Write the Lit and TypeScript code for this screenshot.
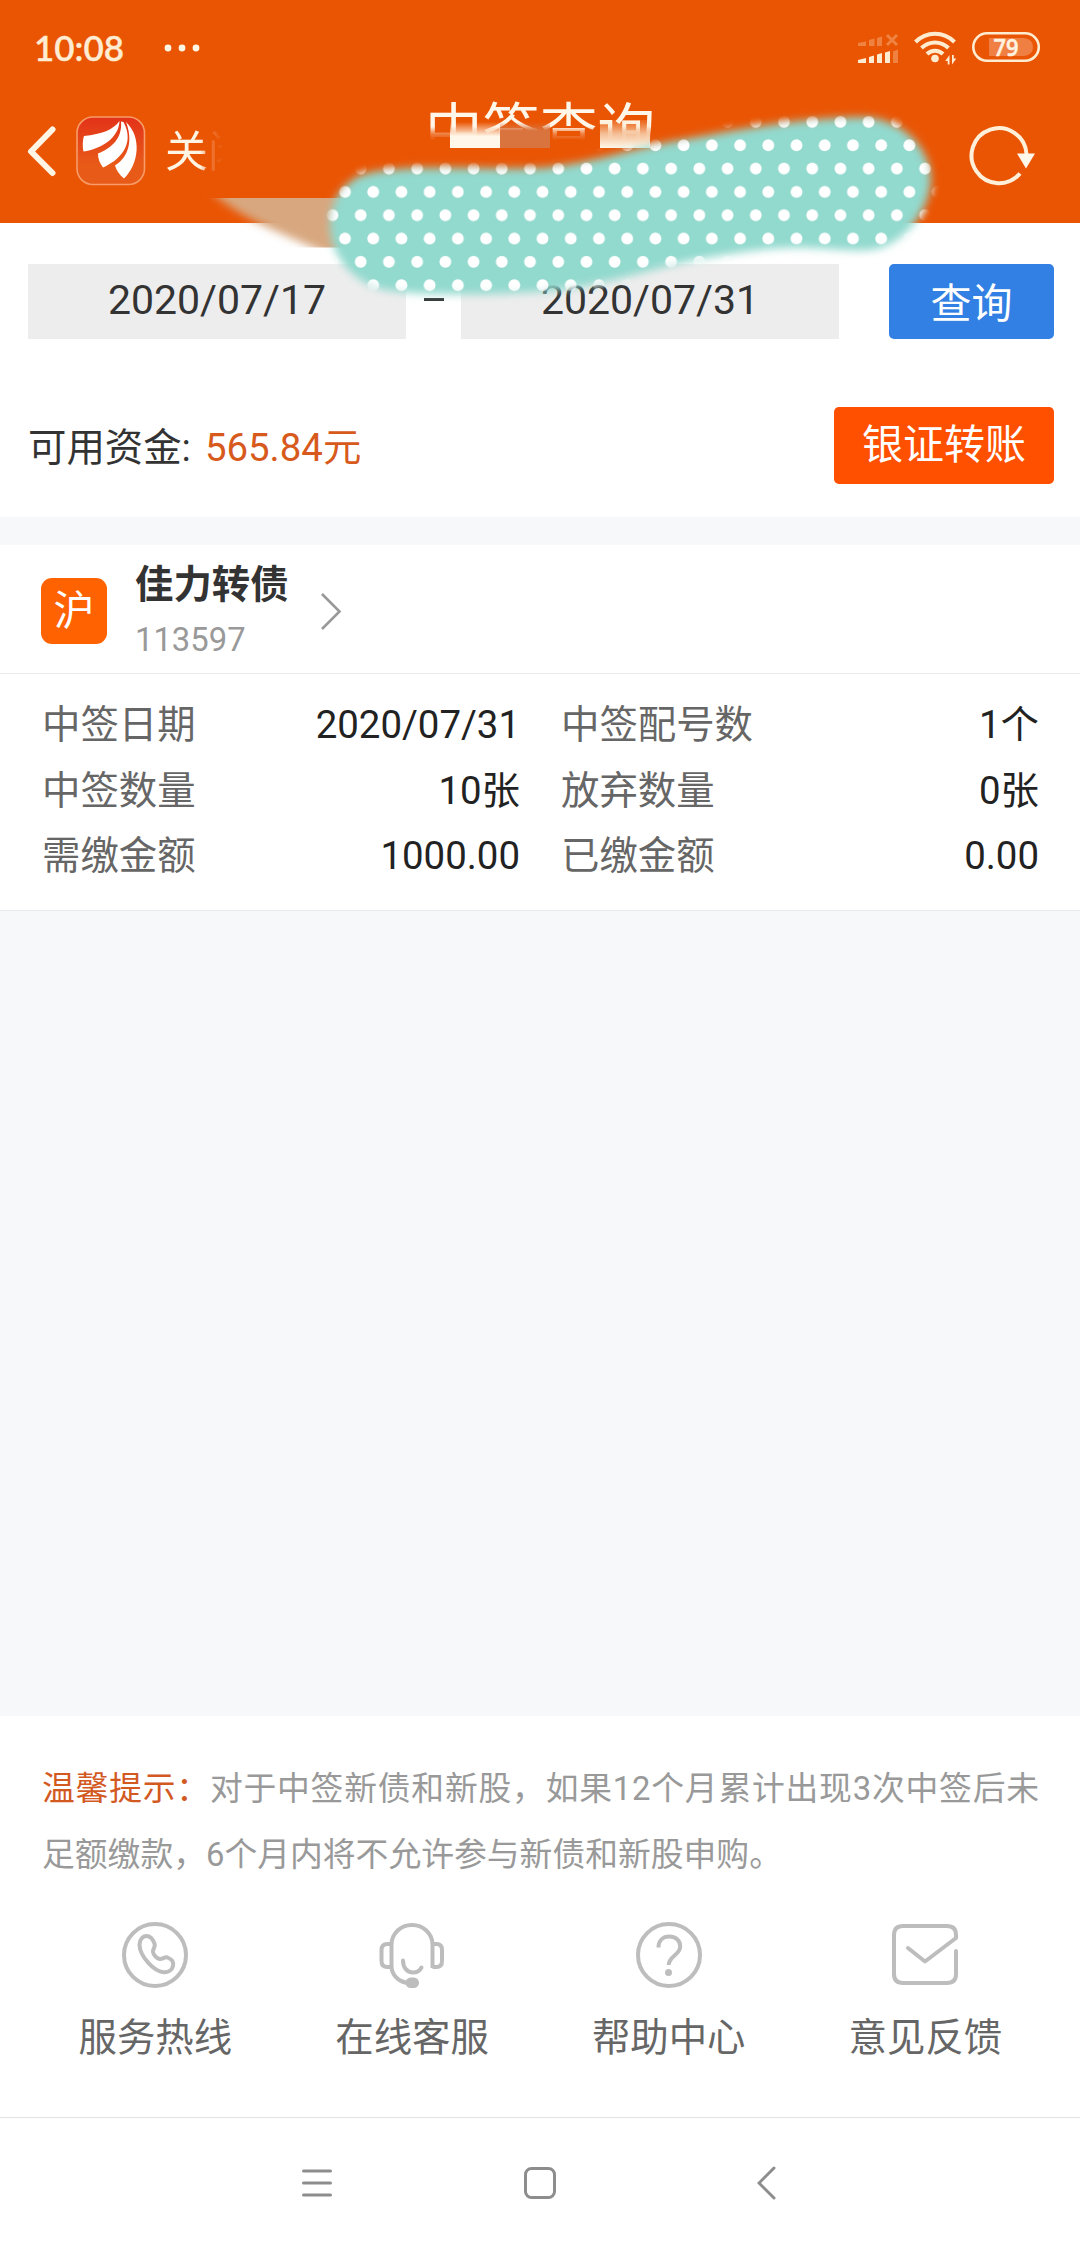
import { LitElement, html, css, svg } from "lit";
import { customElement } from "lit/decorators.js";

interface Cell { label: string; value: string; }

const cells: Cell[] = [
  { label: "中签日期", value: "2020/07/31" },
  { label: "中签配号数", value: "1个" },
  { label: "中签数量", value: "10张" },
  { label: "放弃数量", value: "0张" },
  { label: "需缴金额", value: "1000.00" },
  { label: "已缴金额", value: "0.00" },
];

const services = [
  {
    name: "服务热线",
    icon: svg`<circle cx="34" cy="34" r="31"/>
      <path d="M18.500 24c0-5 3-9 7-9 4.500 0 6.500 3.500 8 7.500 1.500 4-2 5-1.500 8.500.5 3 3.500 6.500 6.500 7 3.500.5 4.500-2.500 8-1.500 4 1.500 6.500 4.500 5.500 8.500-1 4.500-5 6.500-9.500 6.200C33 50.500 19 35.500 18.500 24z"/>`,
  },
  {
    name: "在线客服",
    icon: svg`<path d="M54.500 47V23A20 20 0 0 0 34.500 4h-1A20 20 0 0 0 13.500 23v22c0 9 7 16 17 17"/>
      <path d="M13.500 23h-4q-6 0-6 6v11q0 6 6 6h4M54.500 23h4q5.500 0 5.500 6v11q0 6-5.500 6h-4"/>
      <path d="M25 39.500c0 7 4 12 10 12 4 0 7-2 8.500-5" stroke-linecap="round"/>
      <rect x="27.500" y="56.500" width="13.500" height="10.500" rx="5.200" fill="#bdbdbd" stroke="none"/>`,
  },
  {
    name: "帮助中心",
    icon: svg`<circle cx="34" cy="34" r="31"/>
      <path d="M23.500 26.500c0-7 4.500-11 10.700-11 6.500 0 11 4 11 10 0 8.500-11.500 9.500-11.500 18.500"/>
      <circle cx="33.500" cy="51.500" r="3.500" fill="#bdbdbd" stroke="none"/>`,
  },
  {
    name: "意见反馈",
    icon: svg`<path d="M65 30v23q0 9-9 9H12q-9 0-9-9V14q0-9 9-9h44q9 0 9 9v3L34 40.500 17 27" stroke-linejoin="round" stroke-linecap="round"/>`,
  },
];

const blobPath =
  "M330 228C329 205 341 184 361 175C400 163 470 170 540 168C590 164 620 151 680 140C740 129 800 118 860 117C904 117 931 150 931 180C930 205 914 232 888 245C870 254 850 250 810 248C770 246 720 255 690 261C640 272 600 286 550 291C500 295 420 296 385 290C352 283 331 255 330 228Z";

@customElement("app-root")
export class AppRoot extends LitElement {
  static styles = css`
    :host {
      display: block;
      position: relative;
      width: 1080px;
      height: 2248px;
      overflow: hidden;
      background: #f7f8fa;
      color: #333;
      font-family: Roboto, "Noto Sans CJK SC", sans-serif;
      font-size: 38.400px;
    }
    * { box-sizing: border-box; }
    svg { display: block; flex: none; }
    .page { display: flex; flex-direction: column; height: 2248px; }
    .head { height: 223px; background: #ea5504; color: #fff5e4; flex: none; }
    .status { height: 95px; padding: 0 39px 0 34px; display: flex; align-items: center; }
    .time {
      width: 95px; padding-bottom: 2px; font: 600 35px/36px Lato, sans-serif; color: #ffecd2;
      -webkit-text-stroke: 0.3px #ffecd2;
    }
    .more { margin-left: 34px; }
    .sys { margin-left: auto; }
    .battery { font: 600 23px "Open Sans", sans-serif; }
    .bar { position: relative; display: flex; align-items: center; height: 112px; padding: 0 45px 0 27px; }
    .logo { margin-left: 18px; }
    .close {
      margin-left: 19px; width: 88px; padding-top: 1px; white-space: nowrap; font-size: 43px; line-height: 60px;
      -webkit-mask-image: linear-gradient(90deg, #000 40%, rgba(0,0,0,.2) 53%, transparent 66%);
      mask-image: linear-gradient(90deg, #000 40%, rgba(0,0,0,.2) 53%, transparent 66%);
    }
    .title {
      position: absolute; left: 425px; top: 2px; font-size: 57.500px; line-height: 70px; white-space: nowrap; color: #fff8ea;
      -webkit-mask-image: linear-gradient(#000 42%, rgba(0,0,0,.25) 53%, transparent 62%);
      mask-image: linear-gradient(#000 42%, rgba(0,0,0,.25) 53%, transparent 62%);
    }
    .refresh { margin-left: auto; margin-top: 10px; }
    .query { height: 294px; flex: none; background: #fff; padding: 41px 26px 33px 28px; display: flex; flex-direction: column; }
    .dates { display: flex; height: 75px; }
    .date { width: 378px; background: #ededed; text-align: center; font-size: 41px; line-height: 72px; }
    .dash { width: 55px; display: flex; align-items: center; justify-content: center; padding-bottom: 5px; }
    .dash i { width: 20px; height: 3px; background: #333; }
    .btn { margin-left: auto; color: #fff; font-size: 41px; text-align: center; border-radius: 5px; }
    .search { width: 165px; height: 75px; background: #3280e3; line-height: 81px; }
    .funds { display: flex; margin-top: 68px; height: 77px; line-height: 82px; white-space: pre; }
    .amount { color: #d75a1c; margin-left: 14px; }
    .transfer { width: 220px; height: 77px; background: #ff5000; line-height: 76px; }
    .card { margin-top: 28px; height: 366px; flex: none; background: #fff; border-bottom: 1px solid #e9eaec; }
    .stock { height: 129px; border-bottom: 1px solid #ebebeb; display: flex; align-items: center; padding-left: 41px; }
    .badge { width: 66px; height: 66px; margin-top: 3px; border-radius: 11px; background: #ff6200; color: #fff; font-size: 41px; line-height: 66px; text-align: center; }
    .names { margin-left: 28px; width: 186px; padding-top: 7px; display: flex; flex-direction: column; }
    .name { font-weight: 700; line-height: 54px; }
    .code { font-size: 32.800px; color: #999; line-height: 56px; }
    .grid { display: grid; grid-template-columns: 478px 478px; column-gap: 41px; grid-auto-rows: 65.500px; padding: 18px 0 0 42px; line-height: 65px; }
    .cell { display: flex; justify-content: space-between; }
    .label { color: #666; }
    .value { color: #222; }
    .foot { margin-top: auto; height: 532px; flex: none; background: #fff; display: flex; flex-direction: column; }
    .tip { display: flex; flex-direction: column; padding: 40px 41px 0 42px; height: 205px; font-size: 32.800px; line-height: 66px; color: #999; white-space: nowrap; }
    .full { letter-spacing: 0.780px; }
    .warn { color: #d2591f; }
    .services { display: grid; grid-template-columns: repeat(4, 256.700px); padding-left: 27px; height: 197px; border-bottom: 1px solid #e3e3e3; }
    .service { display: flex; flex-direction: column; align-items: center; color: #666; line-height: 60px; gap: 19px; }
    .nav { flex: 1; display: grid; grid-template-columns: 223px 234px 20px; align-items: center; padding-left: 300px; }
    .nav svg { stroke: #8d8d8d; fill: none; }
    .cover { position: absolute; left: 0; top: 0; pointer-events: none; }
  `;

  render() {
    return html`
      <div class="page">
        <header class="head">
          <div class="status">
            <span class="time">10:08</span>
            <svg class="more" width="40" height="10" fill="#fff5e4">
              <circle cx="5" cy="5" r="3.400"/><circle cx="19" cy="5" r="3.400"/><circle cx="33" cy="5" r="3.400"/>
            </svg>
            <svg class="sys" width="184" height="34" viewBox="858 31 184 34">
              <g fill="#ffebcf">
                <g opacity=".3">
                  <path d="M859 43l8-1.500v4.500h-8zM870 40l5.500-1.500v7.500H870zM878 38l5-1.500v9.500h-5zM894 51.500l5-2v13.500h-5z"/>
                  <path d="M888 35l10 10M898 35l-10 10" stroke="#ffebcf" stroke-width="3"/>
                </g>
                <path d="M859 60l8-2v5h-8zM870 57l5-1.500v7.500h-5zM878 54.500l5-1.500v10h-5zM886 52.500l5-1.500v12h-5z"/>
                <circle cx="936" cy="58.500" r="3.800"/>
                <path d="M950.500 55v9.500h-1.800v-3.500h-2.500zM953 64.500V55h1.800v3.500h2.500z"/>
              </g>
              <g fill="none" stroke="#ffebcf" stroke-width="4">
                <path d="M916.500 42c11-11 28-11 39 0M922.500 48c8-7.500 19-7.500 27 0M928 54c4.500-4.500 11.500-4.500 16 0"/>
                <rect x="974.300" y="33.300" width="65.500" height="27.500" rx="13.700" stroke-width="2.600"/>
              </g>
              <path d="M991 38h34q9 1 9 9t-9 9h-34q-1 0-1-1V39q0-1 1-1z" fill="#fff" opacity=".25"/>
              <text class="battery" x="994.500" y="55.500" textLength="25" lengthAdjust="spacingAndGlyphs" fill="#fff3e0" stroke="#fff3e0" stroke-width=".5">79</text>
            </svg>
          </div>
          <div class="bar">
            <svg width="31" height="52" fill="none" stroke="#fff5e4" stroke-width="6" stroke-linecap="round" stroke-linejoin="round">
              <path d="M25.500 4.500L4 26.500 25.500 48"/>
            </svg>
            <svg class="logo" width="70" height="70">
              <defs><linearGradient id="lg" x2="0" y2="1"><stop stop-color="#e3321a"/><stop offset=".7" stop-color="#e85a18"/><stop offset="1" stop-color="#e85a18"/></linearGradient></defs>
              <rect x="1" y="1" width="67.500" height="67.500" rx="16" fill="url(#lg)" stroke="#f79c68" stroke-width="1.600"/>
              <g fill="#fff">
                <path d="M43.500 5C37 14 26 18 8 20c-1.500 4-1.500 11-.5 15.500C25 33 43 22 43.500 5z"/>
                <path d="M45 5.500C46.500 22 36 32 22 37.500c0 5 1.500 9.500 5 14C42 45 60 29 47.500 6z"/>
                <path d="M50 6C57 24 53 41 39 49.500c1.500 5 4.500 9.500 9 13C63 48 66 21 50 6z"/>
              </g>
            </svg>
            <span class="close">关闭</span>
            <span class="title">中签查询</span>
            <svg class="refresh" width="66" height="62" viewBox="970 125 66 62" fill="none" stroke="#fff0da" stroke-width="4">
              <path d="M1021 173.500A27.500 27.500 0 1 1 1027.500 154"/>
              <path d="M1018 153.500h18l-9 15z" fill="#fff8ea" stroke="none"/>
            </svg>
          </div>
        </header>

        <section class="query">
          <div class="dates">
            <div class="date">2020/07/17</div>
            <div class="dash"><i></i></div>
            <div class="date">2020/07/31</div>
            <div class="btn search">查询</div>
          </div>
          <div class="funds">
            <span>可用资金:</span><span class="amount">565.84元</span>
            <div class="btn transfer">银证转账</div>
          </div>
        </section>

        <section class="card">
          <div class="stock">
            <div class="badge">沪</div>
            <div class="names"><span class="name">佳力转债</span><span class="code">113597</span></div>
            <svg width="22" height="42" fill="none" stroke="#999" stroke-width="2.600"><path d="M1 6l17.500 17.500L1 41"/></svg>
          </div>
          <div class="grid">
            ${cells.map((c) => html`<div class="cell"><span class="label">${c.label}</span><span class="value">${c.value}</span></div>`)}
          </div>
        </section>

        <footer class="foot">
          <div class="tip">
            <div class="full"><span class="warn">温馨提示：</span>对于中签新债和新股，如果12个月累计出现3次中签后未</div>
            <div>足额缴款，6个月内将不允许参与新债和新股申购。</div>
          </div>
          <div class="services">
            ${services.map((s) => html`<div class="service">
              <svg width="68" height="68" fill="none" stroke="#bdbdbd" stroke-width="4">${s.icon}</svg>
              <span>${s.name}</span>
            </div>`)}
          </div>
          <div class="nav">
            <svg width="34" height="34" stroke-width="3" stroke-linecap="round"><path d="M3.500 5h27M3.500 17h27M3.500 29h27"/></svg>
            <svg width="34" height="34"><rect x="2.500" y="2.500" width="29" height="29" rx="6" stroke-width="3"/></svg>
            <svg width="20" height="34" stroke-width="3" stroke-linecap="round"><path d="M17 2L2 17 17 32"/></svg>
          </div>
        </footer>
      </div>

      <svg class="cover" width="1080" height="340">
        <defs>
          <filter id="soft" x="-10%" y="-20%" width="120%" height="140%"><feGaussianBlur stdDeviation="4.500"/></filter>
          <linearGradient id="f1" x2="0" y2="1"><stop stop-color="#fff8ea" stop-opacity="0"/><stop offset=".55" stop-color="#fff8ea"/></linearGradient>
          <linearGradient id="f2" x2="0" y2="1"><stop stop-color="#d9743f" stop-opacity="0"/><stop offset=".35" stop-color="#d9743f"/></linearGradient>
          <linearGradient id="f3" x2="0" y2="1"><stop stop-color="#f6d9b8" stop-opacity=".1"/><stop offset=".5" stop-color="#f9e3c8" stop-opacity=".75"/><stop offset="1" stop-color="#fff8ea"/></linearGradient>
          <pattern id="dots" width="28.220" height="46.640" patternUnits="userSpaceOnUse" patternTransform="translate(338.800 156.900)">
            <circle cx="21.900" cy="11.700" r="5.900" fill="#fff"/><circle cx="6.200" cy="35" r="5.900" fill="#fff"/>
          </pattern>
          <mask id="dotArea" maskUnits="userSpaceOnUse" x="280" y="90" width="700" height="240">
            <path d=${blobPath} fill="#fff" stroke="#fff" stroke-width="2" filter="url(#soft)"/>
          </mask>
          <clipPath id="smear"><rect x="190" y="198" width="160" height="49.500"/></clipPath>
        </defs>
        <rect x="450" y="122" width="50" height="26" fill="url(#f1)"/>
        <rect x="500" y="122" width="50" height="26" fill="url(#f2)"/>
        <rect x="600" y="120" width="50" height="28" fill="url(#f3)"/>
        <g clip-path="url(#smear)">
          <path d="M200 180H370V270H356C318 242 240 228 200 180Z" fill="#d8a77f" filter="url(#soft)"/>
        </g>
        <path d=${blobPath} fill="#92d9ce" filter="url(#soft)"/>
        <rect x="280" y="90" width="700" height="240" fill="url(#dots)" mask="url(#dotArea)"/>
      </svg>
    `;
  }
}
